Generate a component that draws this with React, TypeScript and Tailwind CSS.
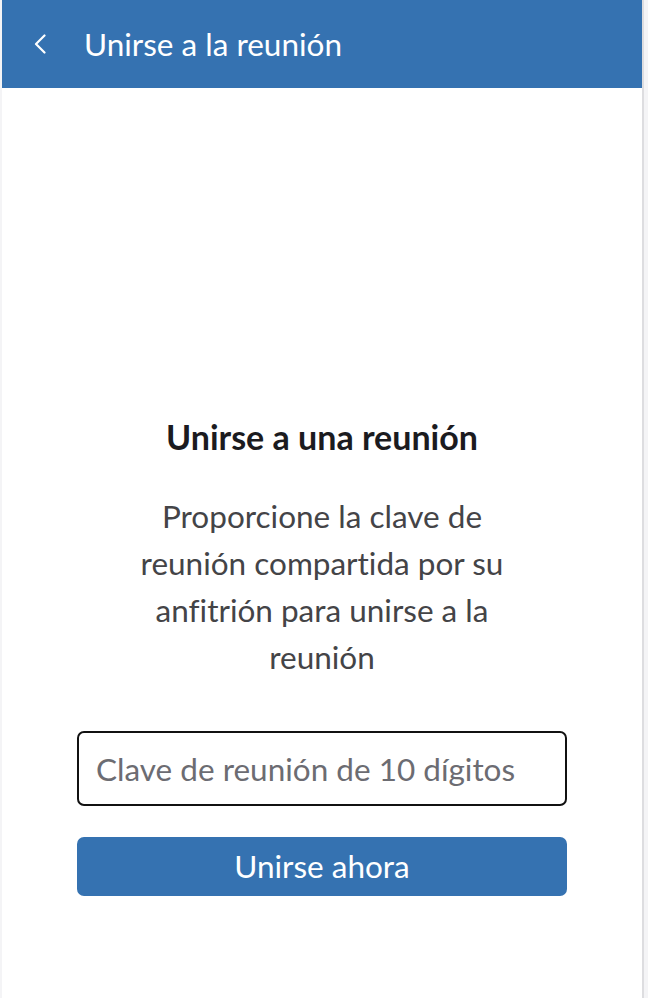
import { useState } from 'react';

export default function App() {
  const [meetingKey, setMeetingKey] = useState('');

  return (
    <div
      className="flex h-[998px] w-[648px] bg-[#f4f4f6] [font-variant-ligatures:none]"
      style={{ fontFamily: 'Lato, "Noto Sans", sans-serif' }}
    >
      <div className="ml-[2px] flex h-full w-[640px] flex-col bg-white">
        {/* Cabecera */}
        <header className="flex h-[88px] shrink-0 items-center bg-[#3572b1] text-white">
          <button className="ml-[31px] flex h-[24px] w-[14px] items-center justify-center">
            <svg width="12" height="20" viewBox="0 0 12 20" fill="none">
              <path
                d="M10.5 1.5L2 10l8.5 8.5"
                stroke="white"
                strokeWidth="2.2"
                strokeLinecap="round"
                strokeLinejoin="round"
              />
            </svg>
          </button>
          <h1 className="ml-[37px] mt-[2px] text-[31.5px] leading-none">Unirse a la reunión</h1>
        </header>

        {/* Contenido */}
        <main className="flex flex-1 flex-col items-center pt-[334px]">
          <h2 className="text-[34px] font-bold leading-[30px] text-[#1b1b1f]">
            Unirse a una reunión
          </h2>
          <p className="mt-[41px] w-[400px] text-center text-[31.5px] leading-[47px] text-[#444447]">
            Proporcione la clave de reunión compartida por su anfitrión para unirse a la reunión
          </p>

          <input
            type="text"
            value={meetingKey}
            onChange={(e) => setMeetingKey(e.target.value)}
            placeholder="Clave de reunión de 10 dígitos"
            className="mt-[50px] h-[75px] w-[490px] rounded-[7px] border-2 border-[#111] px-[17px] text-[31.5px] text-[#222] outline-none placeholder:text-[#6c6c72]"
          />

          <button className="mt-[31px] h-[59px] w-[490px] rounded-[7px] bg-[#3572b1] text-[31.5px] text-white">
            Unirse ahora
          </button>
        </main>
      </div>
      <div className="h-full w-[2px] bg-[#dddde0]" />
    </div>
  );
}
